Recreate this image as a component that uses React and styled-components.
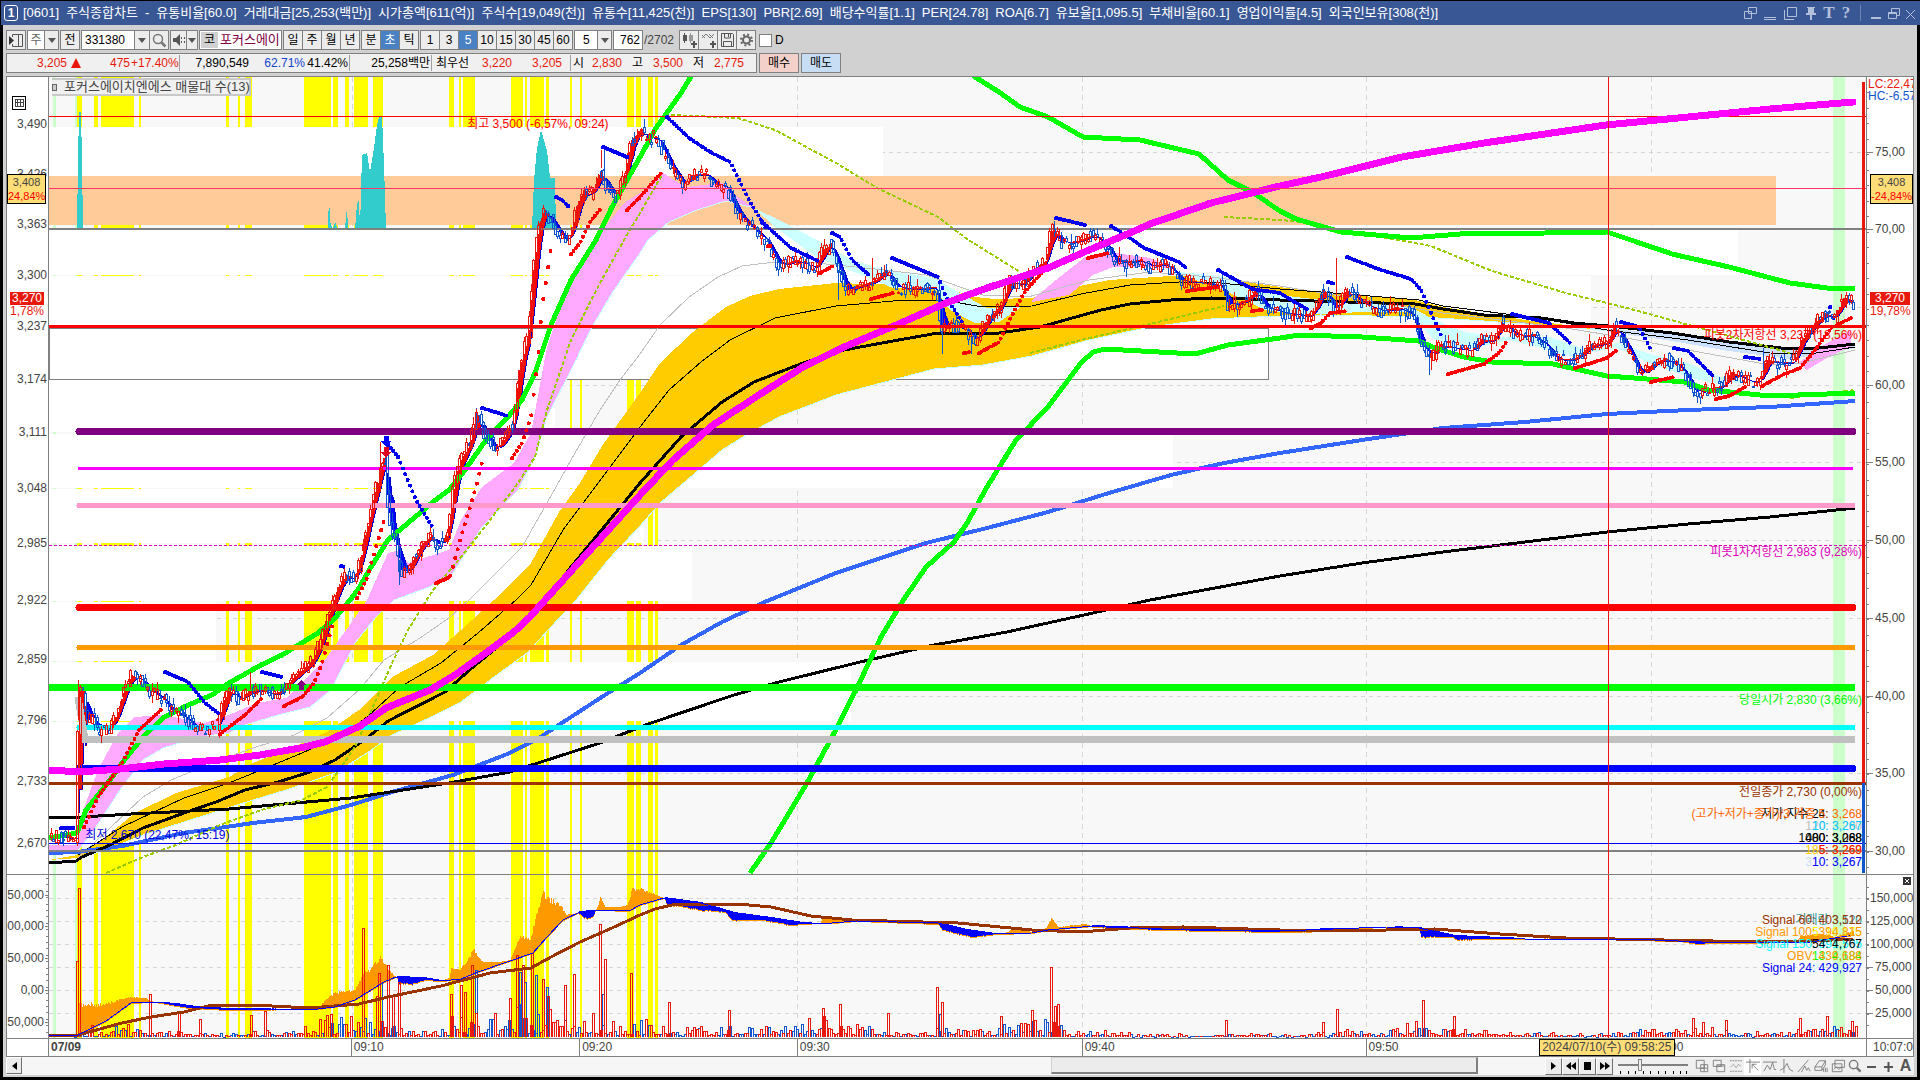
import React from 'react';
import styled, { createGlobalStyle, css } from 'styled-components';

const TITLE_ITEMS = [
  '[0601]', '주식종합차트', '-', '유통비율[60.0]', '거래대금[25,253(백만)]', '시가총액[611(억)]',
  '주식수[19,049(천)]', '유통수[11,425(천)]', 'EPS[130]', 'PBR[2.69]', '배당수익률[1.1]',
  'PER[24.78]', 'ROA[6.7]', '유보율[1,095.5]', '부채비율[60.1]', '영업이익률[4.5]', '외국인보유[308(천)]',
];

const HIGHLIGHTS = [
  [77, 5], [94, 4], [101, 33], [139, 2], [226, 3], [238, 2], [245, 7], [304, 27], [333, 5],
  [345, 4], [354, 14], [373, 10], [449, 5], [459, 2], [463, 12], [511, 12], [525, 2], [530, 14],
  [546, 3], [570, 2], [580, 2], [627, 7], [636, 5], [648, 5], [655, 3],
];

// price-by-volume boxes: top, height, right edge
const PROFILE = [
  [127, 49, 883], [230, 45, 1738], [276, 51, 1591], [380, 52, 555],
  [434, 54, 1173], [489, 54, 644], [546, 55, 692], [602, 59, 216], [662, 59, 851],
  [722, 60, 225], [782, 61, 188],
];

const TIME_GRID = [352, 580, 797, 1082, 1366, 1651];
const PRICE_GRID = [152, 307, 385, 462, 540, 618, 696, 773, 851];
const VOLUME_GRID = [898, 921, 944, 967, 990, 1013];

const MA_MAGENTA = [49,770,80,772,120,769,164,764,220,760,260,755,300,748,325,742,360,726,386,708,430,690,455,675,490,650,515,631,530,617,545,600,592,548,640,495,673,460,713,425,762,393,803,367,844,347,901,323,946,303,987,288,1048,268,1089,250,1130,233,1150,224,1211,203,1280,186,1321,177,1402,157,1484,143,1606,125,1688,117,1770,109,1853,102];
const MA_BLUE = [49,853,77,852,122,846,184,833,253,823,306,817,351,805,392,792,453,775,510,753,539,738,571,717,608,693,640,673,681,645,722,622,767,601,836,573,926,543,987,528,1048,512,1109,493,1171,475,1224,463,1280,453,1362,440,1443,428,1525,422,1607,414,1688,410,1770,407,1855,401];
const MA_LONG = [49,817,82,817,131,814,229,809,351,798,449,783,510,772,600,743,648,724,734,695,779,682,856,663,934,645,1007,632,1093,613,1150,600,1280,576,1362,563,1443,552,1525,542,1607,532,1688,524,1770,517,1855,508];
const MA_MID = [49,863,76,861,82,857,110,845,143,828,184,813,216,802,245,790,278,782,310,772,335,760,367,738,388,721,445,692,473,667,506,640,545,601,571,567,604,527,640,483,681,437,722,402,754,382,803,363,844,350,893,341,938,333,999,333,1040,327,1101,310,1130,304,1171,300,1211,298,1280,300,1415,304,1443,309,1484,315,1541,318,1574,323,1619,327,1672,333,1729,342,1790,349,1819,348,1855,344];
const MA_THIN = [78,855,122,827,184,798,229,783,261,770,302,753,343,735,367,717,400,687,441,663,478,633,516,600,531,585,563,530,640,427,669,390,701,362,730,340,775,318,836,306,893,301,942,300,983,307,1032,306,1081,294,1130,285,1179,282,1220,283,1280,289,1321,292,1419,300,1443,306,1530,317,1607,330,1688,340,1770,353,1810,354,1855,347];
const MA_SILVER = [78,858,94,843,143,797,171,780,220,760,253,748,294,735,327,718,359,690,384,660,420,638,449,618,469,600,522,547,547,503,571,460,600,410,620,380,640,354,660,325,689,297,718,277,742,266,775,262,816,263,885,270,926,275,983,295,1028,297,1089,280,1150,272,1211,277,1280,286,1443,313,1566,328,1627,338,1688,350,1770,365,1802,363,1855,350];
const BAND_UPPER = [49,838,77,833,86,810,110,780,122,763,143,737,163,718,184,707,212,695,229,683,261,665,282,655,318,633,335,618,351,599,359,588,371,567,388,540,408,523,433,502,449,490,465,470,486,440,508,417,522,400,535,373,551,325,571,280,596,240,612,207,640,157,656,128,681,93,695,70];
const BAND_UPPER_2 = [967,70,975,77,999,92,1020,107,1048,117,1083,137,1140,140,1199,154,1228,180,1252,192,1280,211,1296,219,1341,232,1411,238,1460,234,1545,233,1607,232,1631,240,1672,254,1729,267,1790,283,1827,288,1855,288];
const BAND_LOWER = [750,873,771,843,807,783,832,737,856,690,881,637,904,599,926,567,954,542,967,523,987,487,1016,440,1048,407,1081,363,1093,352,1105,349,1195,354,1228,345,1280,338,1300,335,1362,337,1419,341,1435,348,1464,357,1492,362,1553,364,1607,376,1647,379,1684,382,1709,390,1770,396,1827,394,1855,393];

const GOLD_TOP = [49,860,78,855,102,840,135,813,176,793,229,777,253,763,286,750,327,732,359,710,392,677,433,655,461,630,494,600,531,563,559,512,580,483,604,443,640,393,660,363,693,332,726,307,750,296,779,289,836,283,901,285,942,287,975,297,995,299,1032,298,1069,288,1109,280,1171,276,1211,277,1280,287,1321,293,1415,300,1443,307,1525,320,1607,330];
const GOLD_BOTTOM = [78,858,106,850,143,835,184,822,253,800,286,790,335,773,367,753,392,735,429,718,461,702,494,677,527,653,551,627,576,600,608,560,640,526,660,503,693,475,722,450,746,435,779,417,836,395,885,382,934,369,983,365,1032,356,1089,340,1150,327,1211,319,1280,316,1321,315,1423,317,1484,321,1566,327,1607,331];
const PINK_TOP = [49,845,77,845,82,813,98,770,118,733,135,717,163,715,204,723,229,715,257,703,286,698,310,675,327,657,351,623,367,600,388,553,400,550,408,563,449,550,461,520,482,487,514,463,531,433,539,390,547,347,563,300,580,262,600,233,624,203,640,193,662,172,685,187,722,183,738,197,754,208];
const PINK_BOTTOM = [49,852,77,852,94,830,122,787,143,760,163,748,200,737,229,733,245,725,278,715,310,707,331,690,355,643,376,617,394,600,429,587,453,573,482,527,518,490,535,457,547,417,571,370,592,327,612,293,640,253,648,240,669,222,697,210,726,201,754,208];
const CLOUDS = [
  ['#ffcc00', GOLD_TOP, GOLD_BOTTOM],
  ['#cce0ff', [1590,328,1672,333,1729,341,1790,348,1855,344], [1590,329,1672,341,1729,351,1790,359,1855,348]],
  ['#ffaaff', PINK_TOP, PINK_BOTTOM],
  ['#ccffff', [754,208,783,222,817,240,852,260,885,270,934,278,958,292,987,308,1020,307], [775,227,816,257,869,278,893,288,934,288,950,310,975,323,999,322,1020,308]],
  ['#ffaaff', [1032,300,1056,280,1085,257,1109,252,1150,258,1179,270], [1032,302,1069,295,1093,275,1113,267,1150,267,1171,268]],
  ['#ccffff', [1180,272,1228,277,1252,288,1280,295,1321,300,1411,307,1431,318,1464,332,1500,337,1549,337,1582,348,1619,343,1647,353,1688,363,1721,377,1758,382], [1180,274,1228,292,1265,310,1304,315,1362,312,1411,312,1431,337,1451,347,1476,348,1509,340,1549,350,1574,357,1615,347,1647,362,1688,377,1713,383,1758,383]],
  ['#ffaaff', [1798,363,1827,343,1851,330], [1807,370,1830,356,1851,347]],
];

const VOLUME_SPIKES = [
  [77,229,78,160,79,112,81,112,82,160,83,229],
  [328,229,329,193,330,222,333,229],
  [333,229,335,222,338,229],
  [345,229,347,207,348,229],
  [355,229,357,204,359,200,360,229],
  [360,229,362,155,367,153,370,172,374,148,377,125,379,117,382,116,384,165,386,229],
  [532,229,534,180,537,148,541,130,545,144,547,150,550,178,555,178,556,229],
];

const OLIVE = [
  [106,873,143,857,176,845,220,825,261,810,302,800,327,787,339,770,355,747,376,700,392,663,408,630,433,590,461,557,490,520,518,483,535,457,547,410,571,340,600,283,624,240,640,213,662,175],
  [671,115,738,118,775,130,799,143,836,163,877,188,938,217,967,239,1020,272],
  [1224,217,1280,220,1313,223,1341,230,1398,240,1431,246,1492,271,1566,293,1627,308,1700,328,1790,353],
  [1030,353,1085,339,1150,324,1224,306],
  [1790,398,1855,390],
];

const BLUE_DOTS = [
  [603,147,627,157], [556,197,562,200,570,208], [667,117,689,138,710,152,730,162,750,202,767,230],
  [762,222,791,248,818,261], [832,233,840,237,852,260,869,275], [892,258,938,277,946,297,962,322],
  [1056,218,1085,225], [1111,226,1130,238,1144,248,1179,262,1186,268], [1218,270,1252,289,1280,293,1308,310],
  [1328,282,1335,284], [1347,257,1378,269,1411,279,1421,290,1443,340], [1512,314,1549,323,1571,344],
  [1621,322,1639,327,1651,350], [1674,348,1688,351,1713,376], [1745,357,1760,359], [1830,307,1832,307],
  [386,442,398,457,416,500,433,528], [482,408,508,416], [341,566,344,567], [165,672,188,682,205,703,218,713],
  [262,672,282,677], [61,828,75,828],
];

const RED_DOTS = [
  [84,827,98,797,122,763,139,730,163,708], [220,734,245,715,261,699], [284,706,302,697,314,683,322,663,333,623],
  [357,598,367,578,378,540,384,520], [436,583,450,577,461,537,476,487,482,462], [512,458,522,443,531,417,538,357,542,307,551,247],
  [571,254,580,243,590,222,602,207], [627,210,640,197,662,172], [768,246,771,246], [820,273,833,266],
  [871,299,893,293], [964,353,970,352], [979,353,999,342,1011,317,1024,293,1044,270], [1088,258,1109,253],
  [1187,291,1217,287], [1252,311,1262,310], [1311,328,1321,323,1330,313,1347,311], [1448,374,1484,364,1500,352,1508,339],
  [1575,368,1607,358,1618,349], [1651,382,1674,377], [1716,399,1729,396,1745,387], [1762,386,1782,375,1800,368,1815,350,1831,328,1853,317],
];

const PRICE = [50,835,76,838,78,690,82,690,86,722,92,715,97,730,108,728,115,715,123,690,130,675,140,680,150,690,163,700,170,710,185,718,195,728,205,728,218,724,222,700,228,690,240,700,248,690,260,690,275,695,290,680,304,668,312,660,318,645,325,625,332,600,338,585,345,575,352,578,358,565,365,530,372,500,378,475,384,450,386,495,390,530,396,545,400,570,406,572,412,560,420,545,430,535,437,545,447,535,453,480,460,460,470,440,476,415,484,435,495,450,505,435,512,425,518,370,528,330,532,270,537,225,543,210,550,220,560,235,567,242,575,210,582,190,590,195,600,170,607,190,615,195,624,175,630,140,640,130,648,140,655,135,662,150,672,170,683,185,690,175,705,173,715,185,725,185,735,210,748,225,765,240,778,265,795,260,815,268,822,250,830,243,838,270,846,290,860,285,875,280,884,270,895,287,915,288,935,287,940,325,950,325,965,330,975,340,985,320,1000,305,1008,280,1020,285,1032,270,1045,260,1051,225,1060,243,1075,241,1092,235,1105,245,1115,262,1140,260,1150,266,1165,263,1180,280,1200,282,1220,285,1227,305,1245,300,1255,290,1265,308,1300,315,1310,315,1322,290,1335,310,1345,290,1365,305,1380,310,1400,308,1412,315,1420,345,1430,355,1440,345,1470,350,1480,340,1492,340,1500,322,1515,335,1530,335,1545,345,1556,360,1575,358,1590,345,1607,342,1613,325,1625,345,1640,375,1650,365,1665,358,1680,368,1695,392,1710,388,1722,385,1730,372,1745,380,1758,382,1765,360,1780,362,1792,362,1800,340,1812,325,1825,312,1832,320,1842,298,1852,300,1855,310];

// isolated long wicks: x, from, to
const WICKS_UP = [[1336, 258, 315], [380, 442, 480], [601, 150, 168], [78, 680, 720], [1431, 350, 370], [872, 258, 290], [250, 672, 690]];
const WICKS_DOWN = [[942, 320, 354], [971, 330, 354], [399, 560, 585], [476, 408, 430], [838, 270, 300], [1429, 345, 375], [1763, 348, 370], [604, 147, 185]];

const OBV_SIGNAL = [49,1035,78,1035,106,1021,131,1003,151,1002,176,1004,196,1007,229,1009,318,1009,335,1007,355,1000,384,982,396,977,424,978,441,981,461,979,478,972,510,961,533,953,547,937,563,920,580,912,600,910,629,911,640,905,664,898,701,903,734,913,771,918,803,923,832,923,856,921,938,923,967,930,995,934,1032,933,1048,930,1093,926,1162,929,1280,931,1386,927,1419,928,1455,936,1525,939,1631,939,1725,943,1811,942,1853,935];
const OBV = [49,1034,77,1034,78,1004,100,1005,131,997,145,998,150,1001,176,1006,190,1008,229,1010,318,1009,325,1000,335,993,355,990,362,975,370,970,381,957,388,970,397,978,398,983,412,984,425,980,440,981,449,978,451,968,460,970,474,950,482,962,500,962,510,960,520,936,530,940,535,920,542,895,550,900,560,905,566,915,578,913,585,918,592,918,598,905,600,896,605,907,620,907,627,905,632,890,640,889,650,893,664,898,667,905,680,906,700,910,725,912,732,920,760,920,775,922,790,925,803,924,820,923,824,916,832,919,856,921,938,924,942,930,972,937,990,935,1008,932,1012,928,1032,932,1046,928,1051,918,1058,927,1085,924,1093,927,1160,930,1280,932,1335,931,1336,928,1386,927,1419,929,1421,937,1453,937,1457,940,1480,939,1607,938,1631,940,1680,941,1697,944,1725,942,1797,941,1800,936,1820,934,1835,937,1853,931];
const SIGNAL_60 = [49,1035,78,1035,122,1023,151,1017,184,1012,212,1005,253,1005,310,1008,359,1004,388,997,441,986,490,973,531,968,551,957,580,942,612,928,640,915,655,909,676,904,738,904,771,907,811,916,852,920,958,923,1032,930,1081,932,1130,928,1183,927,1280,930,1386,930,1435,929,1500,934,1566,938,1713,941,1811,941,1853,939];

const BARS_LEVEL = [49,1035,76,1035,85,1025,150,1028,220,1033,300,1031,330,1018,380,1005,400,1030,440,1030,460,1010,490,1020,520,1000,545,1000,570,1008,610,1020,640,1022,700,1025,750,1022,850,1024,900,1032,950,1028,1040,1020,1070,1030,1150,1034,1300,1033,1430,1025,1500,1031,1600,1032,1700,1026,1760,1033,1855,1024];
const RED_BARS = [76,961,78,888,149,994,178,1013,199,1019,250,1015,264,1011,330,1014,362,928,378,973,387,965,392,995,398,982,450,994,460,985,464,992,471,965,509,998,516,955,522,965,531,953,542,979,564,985,573,974,599,924,604,959,630,973,668,1002,728,1010,822,1008,839,1004,887,1013,936,987,941,1002,1000,1016,1031,1010,1050,967,1054,1006,1057,1004,1225,1020,1322,1022,1336,1009,1415,1021,1422,1000,1453,1016,1692,1018,1702,1022,1725,1020,1799,1018,1826,1016,1851,1021];
const BLUE_BARS = [380,983,475,970,519,972,524,982,535,975,546,987,602,994,939,1014];

const toPath = (pts) => {
  let d = '';
  for (let i = 0; i < pts.length; i += 2) d += `${i ? 'L' : 'M'}${pts[i]} ${pts[i + 1]}`;
  return d;
};

const toArea = (top, bottom) => {
  const back = [];
  for (let i = bottom.length - 2; i >= 0; i -= 2) back.push(bottom[i], bottom[i + 1]);
  return `${toPath(top)}${toPath(back).replace('M', 'L')}Z`;
};

const valueAt = (pts, x) => {
  for (let i = 2; i < pts.length; i += 2) {
    if (x <= pts[i]) {
      const t = (x - pts[i - 2]) / (pts[i] - pts[i - 2] || 1);
      return pts[i - 1] + t * (pts[i + 1] - pts[i - 1]);
    }
  }
  return pts[pts.length - 1];
};

const makeRandom = (seed) => () => {
  seed = (seed * 1103515245 + 12345) % 2147483648;
  return seed / 2147483648;
};

const STEP = 2.4;

// one dot per candle, so steep runs break up into separate dots
const toDots = (pts) => {
  let d = '';
  for (let x = pts[0]; x <= pts[pts.length - 2]; x += STEP) d += `M${x} ${valueAt(pts, x)}h0.1`;
  return d;
};

const buildCandles = () => {
  const rnd = makeRandom(7);
  let up = '';
  let down = '';
  for (let x = 50; x < 1853; x += STEP) {
    const open = valueAt(PRICE, x - 2) + (rnd() - 0.5) * 12;
    const close = valueAt(PRICE, x + 1) + (rnd() - 0.5) * 12;
    const top = Math.round(Math.min(open, close));
    const bottom = Math.round(Math.max(open, close)) + 1;
    const left = Math.round(x) + 0.5;
    const wickTop = top - Math.round(rnd() * rnd() * 10);
    const wickBottom = bottom + Math.round(rnd() * rnd() * 10);
    const d = `M${left} ${top + 0.5}h2V${bottom + 0.5}h-2ZM${left + 1} ${wickTop}V${top}M${left + 1} ${bottom}V${wickBottom}`;
    if (close < open) up += d;
    else down += d;
  }
  WICKS_UP.forEach(([x, y1, y2]) => { up += `M${x + 0.5} ${y1}V${y2}`; });
  WICKS_DOWN.forEach(([x, y1, y2]) => { down += `M${x + 0.5} ${y1}V${y2}`; });
  return { up, down };
};

const buildAverages = () => {
  const slow = [];
  let rising = '';
  let falling = '';
  for (let x = 50; x < 1853; x += 2) {
    const f = Math.round(valueAt(PRICE, x - 2));
    const s = Math.round((valueAt(PRICE, x - 2) + valueAt(PRICE, x - 6) + valueAt(PRICE, x - 10)) / 3) + 1;
    slow.push(x, s);
    if (f < s) rising += `M${x} ${f}V${s}`;
    else falling += `M${x} ${f}V${s}`;
  }
  return { slow, rising, falling };
};

const buildObv = () => {
  const rnd = makeRandom(3);
  let over = '';
  let under = '';
  let edge = '';
  for (let x = 50; x < 1854; x += 1) {
    const s = Math.round(valueAt(OBV_SIGNAL, x));
    const gap = valueAt(OBV, x) - s;
    const o = Math.round(s + gap * (1 + (rnd() - 0.5) * 0.2));
    const d = `M${x + 0.5} ${o}V${s + 1}`;
    if (o <= s) over += d;
    else {
      under += `M${x + 0.5} ${o}V${s - 1}`;
      edge += `M${x + 0.5} ${o}v1`;
    }
  }
  return { over, under, edge };
};

const buildBars = () => {
  const rnd = makeRandom(11);
  let red = '';
  let blue = '';
  const bar = (x, y) => `M${x + 0.5} 1037V${Math.round(y) + 0.5}h2V1037`;
  for (let x = 50; x < 1855; x += STEP) {
    const peak = 1036 - valueAt(BARS_LEVEL, x);
    const y = 1036 - peak * (0.1 + rnd() * rnd() * 1.5);
    if (rnd() > 0.45) red += bar(Math.round(x), y);
    else blue += bar(Math.round(x), y + 1);
  }
  for (let i = 0; i < BLUE_BARS.length; i += 2) blue += bar(BLUE_BARS[i], BLUE_BARS[i + 1]);
  for (let i = 0; i < RED_BARS.length; i += 2) red += bar(RED_BARS[i], RED_BARS[i + 1]);
  return { red, blue };
};

const candles = buildCandles();
const averages = buildAverages();
const obv = buildObv();
const bars = buildBars();

const Level = ({ y, size, color, from = 79, to = 1853, round }) => (
  <path d={`M${from} ${y}H${to}`} stroke={color} strokeWidth={size} strokeLinecap={round ? 'round' : 'butt'} />
);

const Plot = () => (
  <PlotSvg viewBox="49 77 1818 961" preserveAspectRatio="none" fill="none" shapeRendering="crispEdges" aria-label="가격 차트">
    <rect x="49" y="77" width="1818" height="961" fill="#f8f8f8" />
    {TIME_GRID.map((x) => <path key={x} d={`M${x + 0.5} 77V1038`} stroke="#d6d6d6" strokeDasharray="5 4" />)}
    {PRICE_GRID.concat(VOLUME_GRID).map((y) => <path key={y} d={`M49 ${y + 0.5}H1866`} stroke="#d6d6d6" strokeDasharray="4 4" />)}
    <path d="M53 77h3v961h-3zM75 77h2v961h-2zM1833 77h12v961h-12z" fill="#ccffcc" />
    {HIGHLIGHTS.map(([x, w]) => <rect key={x} x={x} y="77" width={w} height="961" fill="#ffff00" />)}
    {PROFILE.map(([y, h, right]) => <rect key={y} x="49" y={y} width={right - 49} height={h} fill="#ffffff" />)}
    <rect x="49" y="328.5" width="1219" height="51" fill="#ffffff" stroke="#808080" />
    <rect x="49" y="176" width="1727" height="49" fill="#ffcc99" />
    {VOLUME_SPIKES.map((pts, i) => <path key={i} d={`${toPath(pts)}Z`} fill="#33cccc" />)}
    {CLOUDS.map(([color, top, bottom], i) => <path key={i} d={toArea(top, bottom)} fill={color} />)}
    <path d={toPath(GOLD_BOTTOM)} stroke="#ccffff" />
    <path d={toPath(PINK_BOTTOM)} stroke="#ccffff" />
    <path d={toPath(MA_SILVER)} stroke="#c0c0c0" />
    <path d={toPath(MA_THIN)} stroke="#000000" />
    <path d={toPath(MA_BLUE)} stroke="#3366ff" strokeWidth="4" />
    <path d={toPath(MA_LONG)} stroke="#000000" strokeWidth="3" />
    <path d={toPath(MA_MID)} stroke="#000000" strokeWidth="3" />
    <path d={averages.rising} stroke="#ff0000" strokeWidth="2" />
    <path d={averages.falling} stroke="#0000ff" strokeWidth="2" />
    <path d={toPath(averages.slow)} stroke="#0000cc" />
    {OLIVE.map((pts, i) => <path key={i} d={toPath(pts)} stroke="#99cc00" strokeWidth="2" strokeDasharray="4 2" />)}
    <path d={toPath(BAND_UPPER)} stroke="#00ff00" strokeWidth="5" />
    <path d={toPath(BAND_UPPER_2)} stroke="#00ff00" strokeWidth="5" />
    <path d={toPath(BAND_LOWER)} stroke="#00ff00" strokeWidth="5" />
    <Level y={229} size={2} color="#808080" from={49} to={1866} />
    <Level y={116.5} size={1} color="#ff0000" from={49} to={1866} />
    <Level y={431.5} size={7} color="#800080" round />
    <Level y={468.5} size={3} color="#ff00ff" from={78} />
    <Level y={505.5} size={5} color="#ff99cc" round />
    <path d="M49 545.5H1866" stroke="#dd00bb" strokeDasharray="3 2" />
    <Level y={607.5} size={7} color="#ff0000" round />
    <Level y={647.5} size={5} color="#ff9900" round />
    <Level y={687.5} size={7} color="#00ff00" from={49} to={1855} />
    <Level y={727.5} size={5} color="#00ffff" round />
    <path d="M78 697L85 739.5H1855" stroke="#c0c0c0" strokeWidth="7" />
    <Level y={768.5} size={7} color="#0000ff" round />
    <Level y={783.5} size={3} color="#993300" from={49} to={1866} />
    <Level y={843.5} size={1} color="#0000ff" from={49} to={1866} />
    <Level y={851} size={2} color="#808080" from={49} to={1866} />
    <path d={candles.down} stroke="#1155cc" />
    <path d={candles.up} stroke="#e8190c" />
    {BLUE_DOTS.map((pts, i) => <path key={i} d={toDots(pts)} stroke="#0000ee" strokeWidth="4" strokeLinecap="round" />)}
    {RED_DOTS.map((pts, i) => <path key={i} d={toDots(pts)} stroke="#ff0000" strokeWidth="4" strokeLinecap="round" />)}
    <path d={toPath(MA_MAGENTA)} stroke="#ff00ff" strokeWidth="7" strokeLinecap="round" />
    <Level y={326.5} size={3} color="#ff0000" from={49} to={1866} />
    <path d="M384 436h5v5h3l-6 5-6-5h4z" fill="#0000ff" />
    <path d="M384 447h5v5h3l-6 5-6-5h4z" fill="#dd0022" />
    <path d="M301 680l5 5h-2v5h-5v-5h-3z" fill="#800080" />

    <path d={obv.over} stroke="#ff9900" />
    <path d={obv.under} stroke="#0000ff" />
    <path d={obv.edge} stroke="#ff9900" />
    <path d={bars.blue} stroke="#1155cc" />
    <path d={bars.red} stroke="#e8190c" />
    <path d={toPath(SIGNAL_60)} stroke="#993300" strokeWidth="3" />
    <path d={toPath(OBV_SIGNAL)} stroke="#0000ff" />

    <path d="M49 188.5H1866" stroke="#ff3366" />
    <path d="M1608.5 77V1038" stroke="#ee1111" />
    <path d="M1863.5 82V783" stroke="#e8190c" strokeWidth="3" />
    <path d="M1863.5 783V873" stroke="#1155cc" strokeWidth="3" />
    <path d="M49 874.5H1867M1866.5 77V1038" stroke="#808080" />
  </PlotSvg>
);

const LEFT_TICKS = [
  ['3,490', 124], ['3,426', 174], ['3,363', 224], ['3,300', 275], ['3,237', 326], ['3,174', 379], ['3,111', 432],
  ['3,048', 488], ['2,985', 543], ['2,922', 600], ['2,859', 659], ['2,796', 720], ['2,733', 781], ['2,670', 843],
];
const LEFT_LOW_TICKS = [['50,000', 894], ['00,000', 925], ['50,000', 957], ['0,00', 989], ['50,000', 1021]];
const RIGHT_TICKS = [
  ['75,00', 152], ['70,00', 229], ['60,00', 385], ['55,00', 462], ['50,00', 540], ['45,00', 618],
  ['40,00', 696], ['35,00', 773], ['30,00', 851], ['150,000', 898], ['125,000', 921], ['100,000', 944],
  ['75,000', 967], ['50,000', 990], ['25,000', 1013],
];

const minorTicks = (x, from, to, gap) => {
  let d = '';
  for (let y = from; y < to; y += gap) d += `M${x} ${Math.round(y) + 0.5}h2`;
  return d;
};

const LeftAxis = () => (
  <AxisSvg width="42" height="961" viewBox="7 77 42 961" shapeRendering="crispEdges">
    <path d="M48.5 77V1038M7 874.5h42" stroke="#808080" />
    <path d={minorTicks(46, 878, 1036, 6.4)} stroke="#808080" />
    <g fill="none" stroke="#000000">
      <rect x="12.5" y="96.5" width="13" height="13" />
      <path d="M15 99.5h8v7h-8zM15 102.5h8M17.5 99v8M20.5 99v8" stroke="#444444" />
    </g>
    {LEFT_TICKS.map(([label, y]) => <AxisLabel key={y} x="47" y={y + 4} textAnchor="end">{label}</AxisLabel>)}
    {LEFT_LOW_TICKS.map(([label, y]) => <AxisLabel key={y} x="44" y={y + 5} textAnchor="end">{label}</AxisLabel>)}
    {LEFT_LOW_TICKS.map(([, y]) => <path key={y} d={`M45 ${y + 1.5}h3`} stroke="#808080" />)}
  </AxisSvg>
);

const RightAxis = () => (
  <AxisSvg width="46" height="961" viewBox="1867 77 46 961" shapeRendering="crispEdges">
    <path d="M1867 874.5h46" stroke="#808080" />
    <path d={minorTicks(1867, 92, 870, 15.5) + minorTicks(1867, 887, 1030, 11.5)} stroke="#808080" />
    {RIGHT_TICKS.map(([label, y]) => (
      <g key={y}>
        <path d={`M1867 ${y + 0.5}h${label.length > 6 ? 2 : 6}`} stroke="#808080" />
        <AxisLabel x={label.length > 6 ? 1870 : 1875} y={y + 4}>{label}</AxisLabel>
      </g>
    ))}
    <AxisLabel x="1868" y="88" $color="#e8190c">LC:22,47</AxisLabel>
    <AxisLabel x="1868" y="100" $color="#1155cc">HC:-6,57</AxisLabel>
    <rect x="1903" y="877" width="8" height="8" fill="#333333" />
    <path d="M1905 879l4 4m0-4l-4 4" stroke="#ffffff" />
  </AxisSvg>
);

const PERIODS = [['일', '주', '월', '년'], ['분', '초', '틱']];
const MINUTES = ['1', '3', '5', '10', '15', '30', '45', '60'];

const CandleIcon = () => (
  <svg width="15" height="16" fill="#555" shapeRendering="crispEdges">
    <path d="M1 3h4v6H1zM2 1h1v10H2z" /><path d="M7 3h4v6H7zM8 1h1v10H8z" fill="#999" /><path d="M11 9h2v2h2v2h-2v3h-2v-3H9v-2h2z" />
  </svg>
);
const LinePlusIcon = () => (
  <svg width="15" height="16" fill="none" stroke="#777">
    <path d="M1 6l4-4 4 4 4-4M1 3l3 3M8 2l4 4" /><path d="M11 9h2v2h2v2h-2v3h-2v-3H9v-2h2z" fill="#555" stroke="none" />
  </svg>
);
const SaveIcon = () => (
  <svg width="15" height="16" fill="none" stroke="#555">
    <path d="M1.500 1.500h11l1 1v12h-12zM4.500 2v4h6V2M3.500 14V9.500h8V14M8.500 2v3" />
  </svg>
);
const GearIcon = () => (
  <svg width="15" height="16" fill="none" stroke="#666">
    <circle cx="7.500" cy="8" r="3.500" strokeWidth="2" />
    <circle cx="7.500" cy="8" r="5.500" strokeWidth="2" strokeDasharray="2 2.320" />
  </svg>
);
const SearchIcon = ({ size = 15 }) => (
  <svg width={size} height={size} viewBox="0 0 15 15" fill="none" stroke="#777">
    <circle cx="6" cy="6" r="4.500" strokeWidth="1.500" /><path d="M9.500 9.500l4 4" strokeWidth="2.500" />
  </svg>
);
const SpeakerIcon = () => (
  <svg width="14" height="14" fill="#555"><path d="M1 5h3l4-4v12L4 9H1zM9 4h1v2H9zM12 4h1v2h-1zM9 8h1v2H9zM12 8h1v2h-1z" /></svg>
);
const PanelIcon = () => (
  <svg width="15" height="15" fill="none" stroke="#555"><path d="M3.500 4V1.500h10v12h-10V11M9.500 2v11" /><path d="M0 3l5 4.500L0 12z" fill="#333" stroke="none" /></svg>
);
const Caret = () => <svg width="8" height="5" fill="#555"><path d="M0 0h8L4 5z" /></svg>;

const WINDOW_ICONS = [
  { name: '분리', d: 'M5.500 1.500h8v6h-8zM1.500 5.500h7v7h-7z' },
  { name: '접기', d: 'M1 11.500h12M1 13.500h12' },
  { name: '복제', d: 'M4.500 1.500h9v9h-9zM1.500 4v9.500H11' },
  { name: '고정', d: 'M4 1h8v1h-1v5h2v2H9v5H7V9H3V7h2V2H4z', solid: true },
];

const TOOLS = [
  { name: '차트 추가', d: 'M1.500 1.500h9v9h-9zM6.500 6.500h8v8h-8zM10.500 7v7M7 10.500h7' },
  { name: '겹치기', d: 'M1.500 1.500h9v7h-9zM5.500 6.500h9v8h-9zM6 8h8' },
  { name: '영역', d: 'M1 2h14M1 14h14M2 9l3-3 3 4 3-4 3 3', dash: true },
  { name: '십자선', d: 'M0 3.500h16M4.500 0v16M7 6l7 7M7 6h5M7 6v5', active: true },
  { name: '추세선', d: 'M0 3.500h16M1 14l4-7 3 5 3-8 2 8h2' },
  { name: '수직선', d: 'M4.500 0v16M0 13l5-3 3-5 3 7 4 2' },
  { name: '대각선', d: 'M1 15L13 1M5 15l4-7 2 5 2-3 2 4' },
  { name: '전체 삭제', d: 'M1 9l5-7h7l-4 7zM1 9v4h8V9M9 13l4-6V2M11 15v-4M13 15v-5M15 15v-5' },
  { name: '이미지', d: 'M4.500 1.500h11v8h-11zM1.500 5.500h11v9h-11zM3 12l3-3 3 3 3-3' },
];

const App = () => (
  <Desktop>
    <GlobalStyle />
    <TitleBar>
      <Badge>1</Badge>
      <TitleText>{TITLE_ITEMS.map((item) => <span key={item}>{item}</span>)}</TitleText>
      <WindowButtons>
        {WINDOW_ICONS.map(({ name, d, solid }) => (
          <TitleButton key={name} aria-label={name}>
            <svg width="15" height="15" fill={solid ? 'currentColor' : 'none'} stroke={solid ? 'none' : 'currentColor'}><path d={d} /></svg>
          </TitleButton>
        ))}
        <TitleButton $glyph>T</TitleButton>
        <TitleButton $glyph>?</TitleButton>
        <TitleDivider />
        <TitleButton aria-label="최소화"><svg width="13" height="15" fill="none" stroke="currentColor" strokeWidth="2"><path d="M2 12h10" /></svg></TitleButton>
        <TitleButton aria-label="복원"><svg width="13" height="15" fill="none" stroke="currentColor"><path d="M4.500 6V2.500h8v7H9M1.500 6.500h8v6h-8zM1 7.500h8" /></svg></TitleButton>
        <TitleButton aria-label="닫기"><svg width="11" height="15" fill="none" stroke="currentColor"><path d="M1 4l9 9m0-9l-9 9" /></svg></TitleButton>
      </WindowButtons>
    </TitleBar>

    <Body>
      <Toolbar>
        <Group><Tool aria-label="패널"><PanelIcon /></Tool></Group>
        <Group><Tool $w={16} $white $muted>주</Tool><Tool $w={13} aria-label="종류"><Caret /></Tool></Group>
        <Group><Tool>전</Tool></Group>
        <Group>
          <CodeInput defaultValue="331380" aria-label="종목코드" />
          <Tool $w={14} aria-label="목록"><Caret /></Tool>
          <Tool aria-label="검색"><SearchIcon /></Tool>
        </Group>
        <Group><Tool $w={15} aria-label="소리"><SpeakerIcon /></Tool><Tool $w={10} aria-label="소리 설정"><Caret /></Tool></Group>
        <NameBox><Market>코</Market><StockName>포커스에이</StockName></NameBox>
        {PERIODS.map((list) => (
          <Group key={list[0]}>{list.map((p) => <Tool key={p} $active={p === '초'}>{p}</Tool>)}</Group>
        ))}
        <Group>{MINUTES.map((m) => <Tool key={m} $active={m === '5'}>{m}</Tool>)}</Group>
        <Group>
          <CountSelect defaultValue="5" aria-label="간격"><option>5</option></CountSelect>
          <Tool $w={13} aria-label="간격 목록"><Caret /></Tool>
        </Group>
        <Group><RangeInput defaultValue="762" aria-label="표시 개수" /></Group>
        <Total>/2702</Total>
        <Group>
          <Tool aria-label="봉 추가"><CandleIcon /></Tool>
          <Tool aria-label="지표 추가"><LinePlusIcon /></Tool>
          <Tool aria-label="저장"><SaveIcon /></Tool>
          <Tool aria-label="설정"><GearIcon /></Tool>
        </Group>
        <CheckLabel><Check type="checkbox" />D</CheckLabel>
      </Toolbar>

      <QuoteRow>
        <QuoteBox>
          <Quote $w={61} $color="#e8190c">3,205</Quote>
          <Triangle width="10" height="10" fill="#e8190c"><path d="M5 0l5 10H0z" /></Triangle>
          <Quote $w={48} $color="#e8190c">475</Quote>
          <Quote $w={49} $color="#e8190c" $line>+17.40%</Quote>
          <Quote $w={70}>7,890,549</Quote>
          <Quote $w={56} $color="#1144cc">62.71%</Quote>
          <Quote $w={44} $line>41.42%</Quote>
          <Quote $w={82} $line>25,258백만</Quote>
          <Quote $w={38}>최우선</Quote>
          <Quote $w={43} $color="#e8190c">3,220</Quote>
          <Quote $w={58} $color="#e8190c" $line $wide>3,205</Quote>
          <Quote $w={14}>시</Quote>
          <Quote $w={38} $color="#e8190c">2,830</Quote>
          <Quote $w={21}>고</Quote>
          <Quote $w={40} $color="#e8190c">3,500</Quote>
          <Quote $w={21}>저</Quote>
          <Quote $w={40} $color="#e8190c">2,775</Quote>
        </QuoteBox>
        <OrderButton $bg="#f4d0ca">매수</OrderButton>
        <OrderButton $bg="#c6ddf4">매도</OrderButton>
      </QuoteRow>

      <Frame>
        <ChartGrid>
          <AxisBox>
            <LeftAxis />
            <PriceTag $side="left"><span>3,408</span><em>24,84%</em></PriceTag>
            <LastTag $side="left"><b>3,270</b><em>1,78%</em></LastTag>
          </AxisBox>
          <PlotBox>
            <Plot />
            <ChartName><i />포커스에이치엔에스 매물대 수(13)</ChartName>
            <Note $left="23%" $top={39} $color="#ff0000">최고 3,500 (-6,57%, 09:24)</Note>
            <Note $left="2%" $top={750} $color="#0000dd">최저 2,670 (22,47%, 15:19)</Note>
            <Note $top={250} $color="#ff0000">피봇2차저항선 3,237 (18,56%)</Note>
            <Note $top={467} $color="#dd00bb">피봇1차저항선 2,983 (9,28%)</Note>
            <Note $top={615} $color="#00ff00">당일시가 2,830 (3,66%)</Note>
            <Note $top={707} $color="#993300">전일종가 2,730 (0,00%)</Note>
            <Legend $top={731}>
              <li><Over $color="#000">저가,지수 24: &nbsp; &nbsp; &nbsp; &nbsp; &nbsp;</Over><Over $color="#ff6600">(고가+저가+종가)/3 가중 5: 3,268</Over></li>
              <li><Over $color="#c0c0c0">120: 3,280</Over><Over $color="#00ccff">10: 3,267</Over></li>
              <li><Over $color="#000">1000: 3,068</Over><Over $color="#000">480: 3,288</Over></li>
              <li><Over $color="#ffcc00">185: 3,263</Over><Over $color="#ff0000">5: 3,269</Over></li>
              <li><Over $color="#cce0ff">310: 3,267</Over><Over $color="#0000ff">10: 3,267</Over></li>
            </Legend>
            <Legend $top={837}>
              <li><Over $color="#339999">거래량 3,120</Over><Over $color="#993300">Signal 60: 403,512</Over></li>
              <li><Over $color="#ffff00">5: 10,175</Over><Over $color="#ff9900">Signal 100: 394,815</Over></li>
              <li><Over $color="#00ffff">Signal 150: 391,505</Over><Over $color="#000">54: 4,767</Over></li>
              <li><Over $color="#00ff00">13: 4,184</Over><Over $color="#ff9900">OBV: 439,688</Over></li>
              <li><Over $color="#ccffff">24: 4,927</Over><Over $color="#0000ff">Signal 24: 429,927</Over></li>
            </Legend>
          </PlotBox>
          <AxisBox>
            <RightAxis />
            <PriceTag $side="right"><span>3,408</span><em>-24,84%</em></PriceTag>
            <LastTag $side="right"><b>3,270</b><em>19,78%</em></LastTag>
          </AxisBox>
        </ChartGrid>
        <TimeAxis>
          <TimeTrack>
            <TimeCell $grow={303}><b>07/09</b></TimeCell>
            <TimeCell $grow={228}>09:10</TimeCell>
            <TimeCell $grow={217}>09:20</TimeCell>
            <TimeCell $grow={285}>09:30</TimeCell>
            <TimeCell $grow={284}>09:40</TimeCell>
            <TimeCell $grow={285}>09:50</TimeCell>
            <TimeCell $grow={215}>10:00</TimeCell>
            <TimeTag>2024/07/10(수) 09:58:25</TimeTag>
          </TimeTrack>
          <ClockCell>10:07:0</ClockCell>
        </TimeAxis>
      </Frame>

      <BottomBar>
        <ScrollTrack>
          <Raised $w={16} aria-label="왼쪽"><svg width="5" height="8"><path d="M5 0v8L0 4z" /></svg></Raised>
          <Thumb />
        </ScrollTrack>
        <Raised $w={17} aria-label="재생"><svg width="5" height="8"><path d="M0 0v8l5-4z" /></svg></Raised>
        <Raised $w={17} aria-label="뒤로"><svg width="10" height="8"><path d="M5 0v8L0 4zM10 0v8L5 4z" /></svg></Raised>
        <Raised $w={17} aria-label="정지"><svg width="7" height="8"><path d="M0 0h7v8H0z" /></svg></Raised>
        <Raised $w={17} aria-label="앞으로"><svg width="10" height="8"><path d="M0 0v8l5-4zM5 0v8l5-4z" /></svg></Raised>
        <SpeedBox>
          <Speed type="range" min="0" max="10" defaultValue="3" aria-label="속도" />
          <svg width="70" height="3" stroke="#000"><path d="M2.500 0v3M10.500 0v3M17.500 0v3M25.500 0v3M32.500 0v3M40.500 0v3M47.500 0v3M55.500 0v3M62.500 0v3M68.500 0v3" /></svg>
        </SpeedBox>
        {TOOLS.map((t) => (
          <IconButton key={t.name} aria-label={t.name} $active={t.active}>
            <svg width="14" height="14" viewBox="0 0 16 16" fill="none" stroke="#777" strokeDasharray={t.dash ? '2 1' : undefined}><path d={t.d} /></svg>
          </IconButton>
        ))}
        <IconButton aria-label="확대경"><SearchIcon size={14} /></IconButton>
        <IconButton aria-label="축소"><svg width="11" height="11" stroke="#555" strokeWidth="2"><path d="M1 6h9" /></svg></IconButton>
        <IconButton aria-label="확대"><svg width="11" height="11" stroke="#555" strokeWidth="2"><path d="M1 6h9M5.500 1v10" /></svg></IconButton>
        <IconButton $bold>A</IconButton>
      </BottomBar>
    </Body>
  </Desktop>
);

const GlobalStyle = createGlobalStyle`
  * {
    box-sizing: border-box;
  }

  body {
    margin: 0;
    background: #000;
    font-family: 'Liberation Sans', 'Noto Sans CJK KR', sans-serif;
    font-size: 12px;
    line-height: 16px;
    color: #000;
  }

  button,
  input,
  select {
    margin: 0;
    padding: 0;
    border: 0;
    font: inherit;
    color: inherit;
  }

  em,
  i {
    font-style: normal;
  }
`;

const Desktop = styled.div`
  display: flex;
  flex-direction: column;
  min-height: 100vh;
  padding-top: 1px;
  overflow: hidden;
`;

const TitleBar = styled.header`
  display: flex;
  align-items: center;
  height: 24px;
  margin-left: 1px;
  padding: 0 4px 0 3px;
  background: #3a5795;
  color: #fff;
  white-space: nowrap;
`;

const Badge = styled.span`
  width: 14px;
  height: 16px;
  margin-right: 5px;
  border: 1px solid #fff;
  border-radius: 3px;
  font-weight: bold;
  line-height: 14px;
  text-align: center;
`;

const TitleText = styled.h1`
  display: flex;
  flex: 1;
  gap: 7px;
  margin: 0;
  font-size: 13px;
  font-weight: normal;
`;

const WindowButtons = styled.div`
  display: flex;
  align-items: center;
  gap: 5px;
`;

const TitleButton = styled.button`
  display: flex;
  background: none;
  color: #b3c0dc;

  ${({ $glyph }) => $glyph && css`
    width: 12px;
    justify-content: center;
    font-family: 'Liberation Serif', serif;
    font-size: 17px;
    font-weight: bold;
  `}
`;

const TitleDivider = styled.span`
  width: 1px;
  height: 16px;
  margin: 0 3px;
  background: #6f84b1;
`;

const Body = styled.main`
  display: flex;
  flex: 1;
  flex-direction: column;
  margin: 0 3px 3px;
  padding: 5px 3px 0;
  background: #d1d1d1;
`;

const Toolbar = styled.div`
  display: flex;
  align-items: center;
  gap: 1px;
  height: 20px;
`;

const Group = styled.div`
  display: flex;
  height: 20px;
  border: 1px solid #808080;
  background: #808080;
  gap: 1px;
`;

const Tool = styled.button`
  display: flex;
  align-items: center;
  justify-content: center;
  width: ${({ $w = 18 }) => $w}px;
  background: ${({ $active, $white }) => ($active ? '#4a80c4' : $white ? '#fff' : '#ececec')};
  color: ${({ $active, $muted }) => ($active ? '#fff' : $muted ? '#666' : '#000')};
`;

const CodeInput = styled.input`
  width: 52px;
  padding-left: 3px;
  background: #fff;
`;

const NameBox = styled.div`
  display: flex;
  align-items: center;
  width: 83px;
  height: 20px;
  padding: 1px;
  border: 1px solid #808080;
  background: #fff;
  white-space: nowrap;
`;

const Market = styled.span`
  width: 17px;
  background: #d1d1d1;
  text-align: center;
`;

const StockName = styled.span`
  padding-left: 2px;
  color: #800040;
  font-size: 13px;
`;

const CountSelect = styled.select`
  width: 22px;
  padding-left: 8px;
  appearance: none;
  background: #fff;
`;

const RangeInput = styled.input`
  width: 28px;
  padding-right: 2px;
  background: #fff;
  text-align: right;
`;

const Total = styled.span`
  width: 34px;
  color: #444;
`;

const CheckLabel = styled.label`
  display: flex;
  align-items: center;
  gap: 3px;
  margin-left: 2px;
`;

const Check = styled.input`
  width: 13px;
  height: 13px;
  appearance: none;
  border: 1px solid #808080;
  background: #fff;
`;

const QuoteRow = styled.div`
  display: flex;
  gap: 2px;
  height: 20px;
  margin: 3px 0;
`;

const QuoteBox = styled.div`
  display: flex;
  align-items: center;
  width: 751px;
  border: 1px solid #808080;
  background: #f0f0f0;
  white-space: nowrap;
`;

const Quote = styled.span`
  width: ${({ $w }) => $w}px;
  padding-right: ${({ $wide }) => ($wide ? 8 : 1)}px;
  border-right: ${({ $line }) => ($line ? '1px solid #a0a0a0' : '0')};
  color: ${({ $color = '#000' }) => $color};
  text-align: right;
`;

const Triangle = styled.svg`
  margin: 0 2px 0 3px;
`;

const OrderButton = styled.button`
  width: 40px;
  border: 1px solid #808080;
  background: ${({ $bg }) => $bg};
`;

const Frame = styled.section`
  border: 1px solid #808080;
  background: #fff;
`;

const ChartGrid = styled.div`
  display: grid;
  grid-template-columns: 42px 1fr 46px;
`;

const AxisBox = styled.div`
  position: relative;
`;

const PlotBox = styled.div`
  position: relative;
  overflow: hidden;
  white-space: nowrap;
`;

const PlotSvg = styled.svg`
  display: block;
  width: 100%;
  height: 961px;
`;

const AxisSvg = styled.svg`
  display: block;
`;

const AxisLabel = styled.text`
  font-size: 12px;
  fill: ${({ $color = '#444' }) => $color};
`;

const PriceTag = styled.div`
  position: absolute;
  top: 97px;
  left: ${({ $side }) => ($side === 'left' ? 0 : 3)}px;
  display: flex;
  flex-direction: column;
  width: ${({ $side }) => ($side === 'left' ? 39 : 43)}px;
  height: 30px;
  border: 1px solid #000;
  background: #ffdd77;
  color: #444;
  font-size: 11px;
  line-height: 14px;
  text-align: center;

  em {
    color: #ff0000;
  }
`;

const LastTag = styled.div`
  position: absolute;
  top: 215px;
  left: 3px;
  display: flex;
  flex-direction: column;
  width: ${({ $side }) => ($side === 'left' ? 34 : 40)}px;
  line-height: 13px;
  text-align: center;

  b {
    background: #e8190c;
    color: #fff;
    font-weight: normal;
  }

  em {
    color: #e8190c;
    line-height: 12px;
  }
`;

const ChartName = styled.div`
  position: absolute;
  top: 1px;
  left: 3px;
  display: flex;
  align-items: center;
  width: 199px;
  padding-left: 12px;
  border: 2px solid #c8c8c8;
  border-left: 0;
  background: #f0f0f0;
  color: #444;
  font-size: 13px;
  line-height: 14px;

  i {
    position: absolute;
    left: 0;
    width: 5px;
    height: 7px;
    border: 1px solid #666;
    background: #ccc;
  }
`;

const Note = styled.span`
  position: absolute;
  top: ${({ $top }) => $top}px;
  ${({ $left }) => ($left ? `left: ${$left};` : 'right: 5px;')}
  color: ${({ $color }) => $color};
`;

const Legend = styled.ul`
  position: absolute;
  top: ${({ $top }) => $top}px;
  right: 5px;
  margin: 0;
  padding: 0;
  list-style: none;
  line-height: 12px;

  li {
    display: grid;
    justify-items: end;
  }
`;

const Over = styled.span`
  grid-area: 1 / 1;
  color: ${({ $color }) => $color};
`;

const TimeAxis = styled.div`
  display: flex;
  height: 18px;
  border-top: 1px solid #808080;
  color: #444;
  line-height: 16px;
`;

const TimeTrack = styled.div`
  position: relative;
  display: flex;
  flex: 1;
  margin-left: 41px;
`;

const TimeCell = styled.span`
  flex: ${({ $grow }) => $grow} 0 0;
  padding-left: 2px;
  border-left: 1px solid #808080;
`;

const TimeTag = styled.span`
  position: absolute;
  top: 0;
  left: 82%;
  width: 136px;
  height: 17px;
  border: 1px solid #000;
  background: #ffdd77;
  line-height: 15px;
  text-align: center;
  white-space: nowrap;
`;

const ClockCell = styled.span`
  width: 47px;
  padding-left: 6px;
  border-left: 1px solid #808080;
`;

const BottomBar = styled.div`
  display: flex;
  align-items: center;
  height: 18px;
  background: #f0f0f0;
`;

const ScrollTrack = styled.div`
  display: flex;
  flex: 1;
  justify-content: space-between;
  height: 18px;
  padding-right: 67px;
  background: #f6f6f6;
`;

const Raised = styled.button`
  display: flex;
  align-items: center;
  justify-content: center;
  width: ${({ $w }) => $w}px;
  height: 17px;
  border: 1px solid #fff;
  border-right-color: #707070;
  border-bottom-color: #707070;
  background: #ececec;
`;

const Thumb = styled.div`
  width: 29%;
  height: 17px;
  border: 1px solid #d0d0d0;
  border-right: 2px solid #808080;
  border-bottom: 2px solid #808080;
  background: #ececec;
`;

const SpeedBox = styled.div`
  display: flex;
  flex-direction: column;
  align-items: center;
  width: 80px;
`;

const Speed = styled.input`
  width: 70px;
  height: 13px;
  appearance: none;
  background: linear-gradient(#808080, #808080) center / 100% 2px no-repeat;

  &::-webkit-slider-thumb {
    width: 4px;
    height: 12px;
    appearance: none;
    border: 1px solid #808080;
    background: #f0f0f0;
  }
`;

const IconButton = styled.button`
  display: flex;
  align-items: center;
  justify-content: center;
  width: 17px;
  height: 18px;
  background: ${({ $active }) => ($active ? '#fff' : 'none')};
  color: #555;
  font-weight: ${({ $bold }) => ($bold ? 'bold' : 'normal')};
  font-size: 16px;
`;

export default App;
